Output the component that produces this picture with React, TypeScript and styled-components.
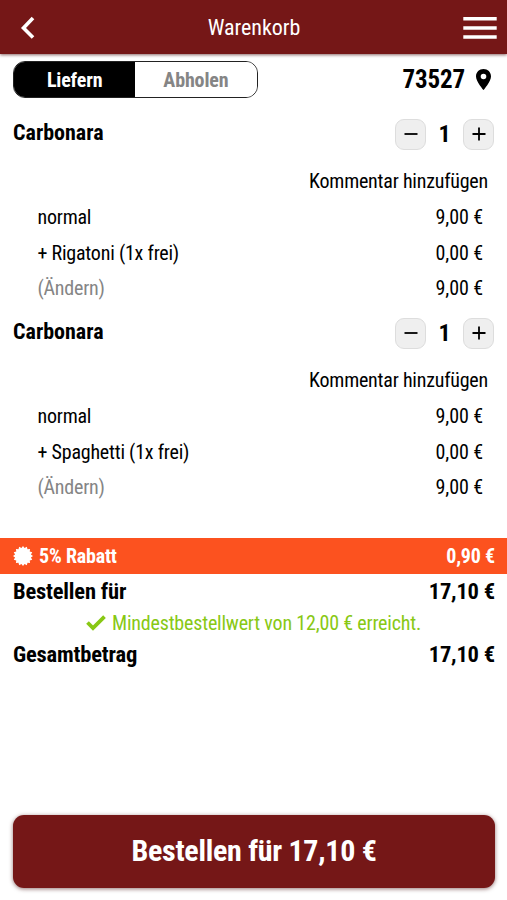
import React from 'react';
import styled, { createGlobalStyle } from 'styled-components';

const Global = createGlobalStyle`
  * { box-sizing: border-box; }
  body { margin: 0; background: #fff; color: #000; overflow: hidden; }
  body, button {
    font-family: "Roboto Condensed", Roboto, "Liberation Sans", sans-serif;
    font-stretch: 75%;
  }
  button { border: 0; padding: 0; background: none; color: inherit; cursor: pointer; }
`;

const Page = styled.main`
  display: flex;
  flex-direction: column;
  width: 507px;
  height: 900px;
`;

const Header = styled.header`
  flex: none;
  height: 54px;
  padding: 0 10px 0 20px;
  display: grid;
  grid-template-columns: 34px 1fr 34px;
  align-items: center;
  background: #751717;
  color: #fff;
  box-shadow: 0 1px 3px rgba(60, 0, 0, 0.6);
  svg { display: block; }
`;

const Heading = styled.h1`
  margin: 0;
  padding-right: 9px;
  font-size: 22px;
  font-weight: 450;
  letter-spacing: -0.05px;
  text-align: center;
`;

const OrderBar = styled.div`
  flex: none;
  height: 52.5px;
  padding: 7px 16px 0 13px;
  display: flex;
  justify-content: space-between;
  align-items: flex-start;
`;

const Toggle = styled.div`
  display: flex;
  width: 244.5px;
  height: 37px;
  overflow: hidden;
  border: 1px solid #222;
  border-radius: 12px;
`;

const Option = styled.button<{ $active?: boolean }>`
  flex: 1;
  font-size: 20px;
  font-weight: 700;
  letter-spacing: -0.15px;
  background: ${p => (p.$active ? '#000' : '#fff')};
  color: ${p => (p.$active ? '#fff' : '#858585')};
`;

const Place = styled.div`
  display: flex;
  align-items: center;
  gap: 11px;
  height: 36px;
  font-size: 25px;
  font-weight: 700;
  letter-spacing: -0.15px;
`;

const Item = styled.section`
  flex: none;
  height: 199.2px;
  padding: 0 13px;
`;

const ItemHead = styled.div`
  display: flex;
  justify-content: space-between;
  height: 57px;
  padding-top: 12px;
`;

const ItemName = styled.h2`
  margin: 0;
  font-size: 22px;
  line-height: 28px;
  font-weight: 700;
`;

const Stepper = styled.div`
  display: flex;
  align-items: center;
  height: 31px;
`;

const StepButton = styled.button`
  display: grid;
  place-items: center;
  width: 31px;
  height: 31px;
  border: 1px solid #ddd;
  border-radius: 9px;
  background: #efefef;
`;

const Count = styled.span`
  width: 37px;
  text-align: center;
  font-size: 24px;
  font-weight: 700;
`;

const Line = styled.div<{ $comment?: boolean; $muted?: boolean }>`
  display: flex;
  align-items: center;
  justify-content: ${p => (p.$comment ? 'flex-end' : 'space-between')};
  height: 35.5px;
  padding: ${p => (p.$comment ? '0 6px 0 25px' : '1px 11px 0 24.5px')};
  font-size: 20px;
  font-weight: ${p => (p.$muted ? 400 : 450)};
  letter-spacing: -0.22px;
  span:first-child { color: ${p => (p.$muted ? '#858585' : '#000')}; }
  span:last-child { font-weight: 450; letter-spacing: ${p => (p.$comment ? '-0.22px' : '-0.1px')}; }
  ${p => p.$muted && 'span:first-child { font-weight: 400; }'}
`;

const Discount = styled.div`
  flex: none;
  display: flex;
  align-items: center;
  height: 36px;
  margin-top: 33.1px;
  padding: 1px 12px 0 13px;
  background: #fc521f;
  color: #fff;
  font-size: 20px;
  font-weight: 700;
  letter-spacing: -0.2px;
  svg { margin-right: 6px; }
  span:last-child { margin-left: auto; }
`;

const Total = styled.div`
  flex: none;
  display: flex;
  align-items: center;
  justify-content: space-between;
  height: 34px;
  padding: 0 12px 0 13px;
  font-size: 22.5px;
  font-weight: 700;
  letter-spacing: -0.18px;
`;

const Minimum = styled.div`
  flex: none;
  display: flex;
  align-items: center;
  justify-content: center;
  gap: 6px;
  height: 29px;
  padding-top: 1px;
  font-size: 20px;
  font-weight: 420;
  letter-spacing: -0.19px;
  color: #88c814;
`;

const OrderButton = styled.button`
  flex: none;
  height: 73px;
  margin: auto 12px 12px 13px;
  padding-bottom: 2px;
  border-radius: 11px;
  background: #751717;
  color: #fff;
  font-size: 30px;
  font-weight: 700;
  letter-spacing: -0.28px;
  box-shadow: 0 1px 4px rgba(60, 0, 0, 0.55);
`;

const sealPoints = Array.from({ length: 32 }, (_, i) => {
  const r = i % 2 ? 8.1 : 10;
  const a = (i * Math.PI) / 16;
  return `${10 + r * Math.sin(a)},${10 - r * Math.cos(a)}`;
}).join(' ');

function CartItem({ extra }: { extra: string }) {
  return (
    <Item>
      <ItemHead>
        <ItemName>Carbonara</ItemName>
        <Stepper>
          <StepButton aria-label="Weniger">
            <svg width="14" height="14"><path d="M.5 7h13" stroke="#000" strokeWidth="1.8" /></svg>
          </StepButton>
          <Count>1</Count>
          <StepButton aria-label="Mehr">
            <svg width="14" height="14"><path d="M.5 7h13M7 .5v13" stroke="#000" strokeWidth="1.8" /></svg>
          </StepButton>
        </Stepper>
      </ItemHead>
      <Line $comment><span>Kommentar hinzufügen</span></Line>
      <Line><span>normal</span><span>9,00 €</span></Line>
      <Line><span>{extra}</span><span>0,00 €</span></Line>
      <Line $muted><span>(Ändern)</span><span>9,00 €</span></Line>
    </Item>
  );
}

export default function App() {
  return (
    <>
      <Global />
      <Page>
        <Header>
          <svg width="16" height="24" viewBox="0 0 16 24">
            <path d="M13 3 3.5 13 13 22.5" fill="none" stroke="#fff" strokeWidth="3.6" />
          </svg>
          <Heading>Warenkorb</Heading>
          <svg width="34" height="24" viewBox="0 0 34 24">
            <path d="M.3 3.7h33.4M.3 13h33.4M.3 22h33.4" stroke="#fff" strokeWidth="3.6" />
          </svg>
        </Header>
        <OrderBar>
          <Toggle>
            <Option $active>Liefern</Option>
            <Option>Abholen</Option>
          </Toggle>
          <Place>
            <span>73527</span>
            <svg width="15" height="21" viewBox="0 0 15 21">
              <path fillRule="evenodd" d="M7.5 0C3.2 0 0 3.2 0 7.4 0 12.4 7.5 21 7.5 21S15 12.4 15 7.4C15 3.2 11.8 0 7.5 0Zm0 4.7a2.8 2.8 0 1 1 0 5.6 2.8 2.8 0 0 1 0-5.6Z" />
            </svg>
          </Place>
        </OrderBar>
        <CartItem extra="+ Rigatoni (1x frei)" />
        <CartItem extra="+ Spaghetti (1x frei)" />
        <Discount>
          <svg width="20" height="20"><polygon points={sealPoints} fill="#fff" /></svg>
          <span>5% Rabatt</span>
          <span>0,90 €</span>
        </Discount>
        <Total><span>Bestellen für</span><span>17,10 €</span></Total>
        <Minimum>
          <svg width="20" height="16" viewBox="0 0 20 16">
            <path d="M1.5 7.5 7 13 18.5 1.7" fill="none" stroke="currentColor" strokeWidth="3.8" />
          </svg>
          <span>Mindestbestellwert von 12,00 € erreicht.</span>
        </Minimum>
        <Total><span>Gesamtbetrag</span><span>17,10 €</span></Total>
        <OrderButton>Bestellen für 17,10 €</OrderButton>
      </Page>
    </>
  );
}
